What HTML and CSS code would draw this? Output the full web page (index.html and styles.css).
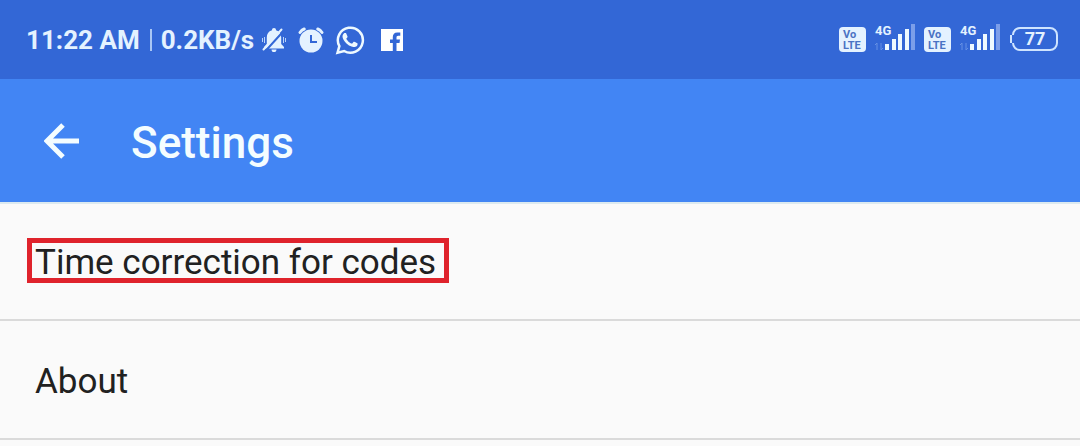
FILE: index.html
```
<!DOCTYPE html>
<html lang="en">
<head>
    <meta charset="UTF-8">
    <meta name="viewport" content="width=device-width, initial-scale=1.0">
    <title>Settings</title>
    <link rel="stylesheet" href="styles.css">
</head>
<body>

    <div class="status-bar">
        <div class="status-left">
            <span class="clock">11:22 AM</span>
            <span class="divider"></span>
            <span class="speed">0.2KB/s</span>
            <div class="notifications">
                <!-- muted bell -->
                <svg width="26" height="26" viewBox="0 0 26 26">
                    <path fill="#e4f2ff" d="M13 1c1.300 0 2 .9 2 2.200 3.600 1 5.200 3.800 5.200 7.300v6.500l2.800 3v1.500H3V20l2.800-3v-6.500c0-3.500 1.600-6.300 5.200-7.300C11 1.900 11.700 1 13 1zM10.500 22.500h5c0 1.600-1 2.600-2.500 2.600s-2.500-1-2.500-2.600z"/>
                    <path stroke="#3367d6" stroke-width="2" d="M4 24.500L23 3.500"/>
                    <path stroke="#e4f2ff" stroke-width="2" stroke-linecap="round" d="M2.500 22.500L20.500 2.500"/>
                    <path stroke="#b9d3fa" stroke-width="1" d="M3.500 10v6M1.500 11v4M22.500 10v6M24.500 11v4"/>
                </svg>
                <!-- alarm -->
                <svg width="26" height="26" viewBox="0 0 26 26">
                    <path fill="none" stroke="#e4f2ff" stroke-width="3" stroke-linecap="round" d="M2 5.500C3 4 4.500 2.600 6.200 2M24 5.500C23 4 21.500 2.600 19.800 2"/>
                    <circle cx="13" cy="14" r="11.500" fill="#e4f2ff"/>
                    <path fill="none" stroke="#3367d6" stroke-width="2" d="M13 8v7h6"/>
                </svg>
                <!-- whatsapp -->
                <svg width="30" height="30" viewBox="0 0 24 24">
                    <path fill="#eef9ff" d="M17.472 14.382c-.297-.149-1.758-.867-2.030-.967-.273-.099-.471-.148-.670.150-.197.297-.767.966-.940 1.164-.173.199-.347.223-.644.075-.297-.150-1.255-.463-2.390-1.475-.883-.788-1.480-1.761-1.653-2.059-.173-.297-.018-.458.130-.606.134-.133.298-.347.446-.520.149-.174.198-.298.298-.497.099-.198.050-.371-.025-.520-.075-.149-.669-1.612-.916-2.207-.242-.579-.487-.500-.669-.510-.173-.008-.371-.010-.570-.010-.198 0-.520.074-.792.372-.272.297-1.040 1.016-1.040 2.479 0 1.462 1.065 2.875 1.213 3.074.149.198 2.096 3.200 5.077 4.487.709.306 1.262.489 1.694.625.712.227 1.360.195 1.871.118.571-.085 1.758-.719 2.006-1.413.248-.694.248-1.289.173-1.413-.074-.124-.272-.198-.570-.347z"/>
                    <path fill="none" stroke="#eef9ff" stroke-width="2" d="M2 22.200l1.500-5.300A10 10 0 1 1 7.300 20.800z"/>
                </svg>
                <!-- facebook -->
                <svg width="24" height="24" viewBox="0 0 24 24">
                    <path fill="#fff" d="M1 1h22v22h-6.500v-8h3l.5-3.500h-3.500V9.500c0-1 .4-1.700 1.800-1.700h2V4.500h-3c-3 0-4.500 1.800-4.500 4.500v2.500H10V15h2.800v8H1z"/>
                </svg>
            </div>
        </div>

        <div class="status-right">
            <span class="volte"><span>Vo</span><span>LTE</span></span>
            <div class="signal">
                <span class="network">4G</span>
                <svg width="40" height="28" viewBox="0 0 40 28">
                    <path stroke="#6791e4" stroke-width="1" fill="none" d="M2 27v-7l-2 2M6 20v7l2-2"/>
                    <path fill="#eef9ff" d="M10 21h4v6h-4zM17 16h4v11h-4zM23 11h4v16h-4zM30 6h4v21h-4z"/>
                    <path fill="#7c9ee9" d="M36 1h4v26h-4z"/>
                </svg>
            </div>
            <span class="volte"><span>Vo</span><span>LTE</span></span>
            <div class="signal">
                <span class="network">4G</span>
                <svg width="40" height="28" viewBox="0 0 40 28">
                    <path stroke="#6791e4" stroke-width="1" fill="none" d="M2 27v-7l-2 2M6 20v7l2-2"/>
                    <path fill="#eef9ff" d="M10 21h4v6h-4zM17 16h4v11h-4zM23 11h4v16h-4zM30 6h4v21h-4z"/>
                    <path fill="#7c9ee9" d="M36 1h4v26h-4z"/>
                </svg>
            </div>
            <span class="battery">77</span>
        </div>
    </div>

    <header class="app-bar">
        <button class="back" aria-label="Back">
            <svg width="36" height="36" viewBox="0 0 36 36">
                <path fill="none" stroke="#f4fdff" stroke-width="5" d="M35 18H4M19 2L3 18l16 16"/>
            </svg>
        </button>
        <h1>Settings</h1>
    </header>

    <main class="settings">
        <a href="#time" class="row"><span class="label highlight">Time correction for codes</span></a>
        <a href="#about" class="row"><span class="label">About</span></a>
    </main>

</body>
</html>
```
FILE: styles.css
```
body {
    margin: 0;
    font-family: Roboto, sans-serif;
    background-color: #fafafa;
    color: #212121;
}
svg {
    display: block;
}
.status-bar {
    display: flex;
    align-items: center;
    justify-content: space-between;
    height: 79px;
    padding: 0 22px 0 26px;
    background-color: #3367d6;
    color: #e4f2ff;
    font-size: 26px;
    font-weight: 700;
}
.status-left,
.status-right,
.notifications {
    display: flex;
    align-items: center;
}
.divider {
    width: 2px;
    height: 22px;
    margin: 0 9px 0 10px;
    background-color: #a9c6f5;
}
.notifications {
    gap: 11px;
    margin-left: 7px;
}
.notifications svg:last-child {
    margin-left: 4px;
}
.status-right {
    gap: 9px;
}
.volte {
    display: flex;
    flex-direction: column;
    align-items: flex-start;
    justify-content: center;
    box-sizing: border-box;
    width: 27px;
    height: 25px;
    padding-left: 4px;
    border-radius: 4px;
    background-color: #e4f2ff;
    color: #4a73c4;
    font-size: 11px;
    line-height: 11px;
}
.signal {
    position: relative;
    margin-bottom: 5px;
}
.network {
    position: absolute;
    top: 1px;
    left: 0;
    font-size: 13px;
    line-height: 14px;
}
.battery {
    position: relative;
    box-sizing: border-box;
    width: 46px;
    height: 24px;
    margin: 0 0 2px 3px;
    border: 2px solid #cfe4ff;
    border-radius: 8px;
    font-size: 18px;
    line-height: 20px;
    text-align: center;
}
.battery::before {
    content: "";
    position: absolute;
    top: 6px;
    left: -4px;
    width: 2px;
    height: 8px;
    border-left: 2px solid #cfe4ff;
    background-color: #3367d6;
}
.app-bar {
    display: flex;
    align-items: center;
    height: 123px;
    padding: 0 44px;
    background-color: #4285f4;
    box-shadow: 0 2px 0 #dceaf0;
}
.back {
    padding: 0;
    border: none;
    background: none;
    cursor: pointer;
}
.app-bar h1 {
    margin: 4px 0 0 51px;
    color: #f4fdff;
    font-size: 44px;
    font-weight: 500;
}
.row {
    display: flex;
    align-items: center;
    height: 117px;
    padding: 0 35px;
    border-bottom: 2px solid #dadada;
    color: inherit;
    font-size: 35px;
    text-decoration: none;
}
.label {
    padding-top: 4px;
    line-height: 31px;
}
.highlight {
    margin-left: -8px;
    padding-right: 8px;
    padding-left: 3px;
    border: 5px solid #df232c;
}
```
